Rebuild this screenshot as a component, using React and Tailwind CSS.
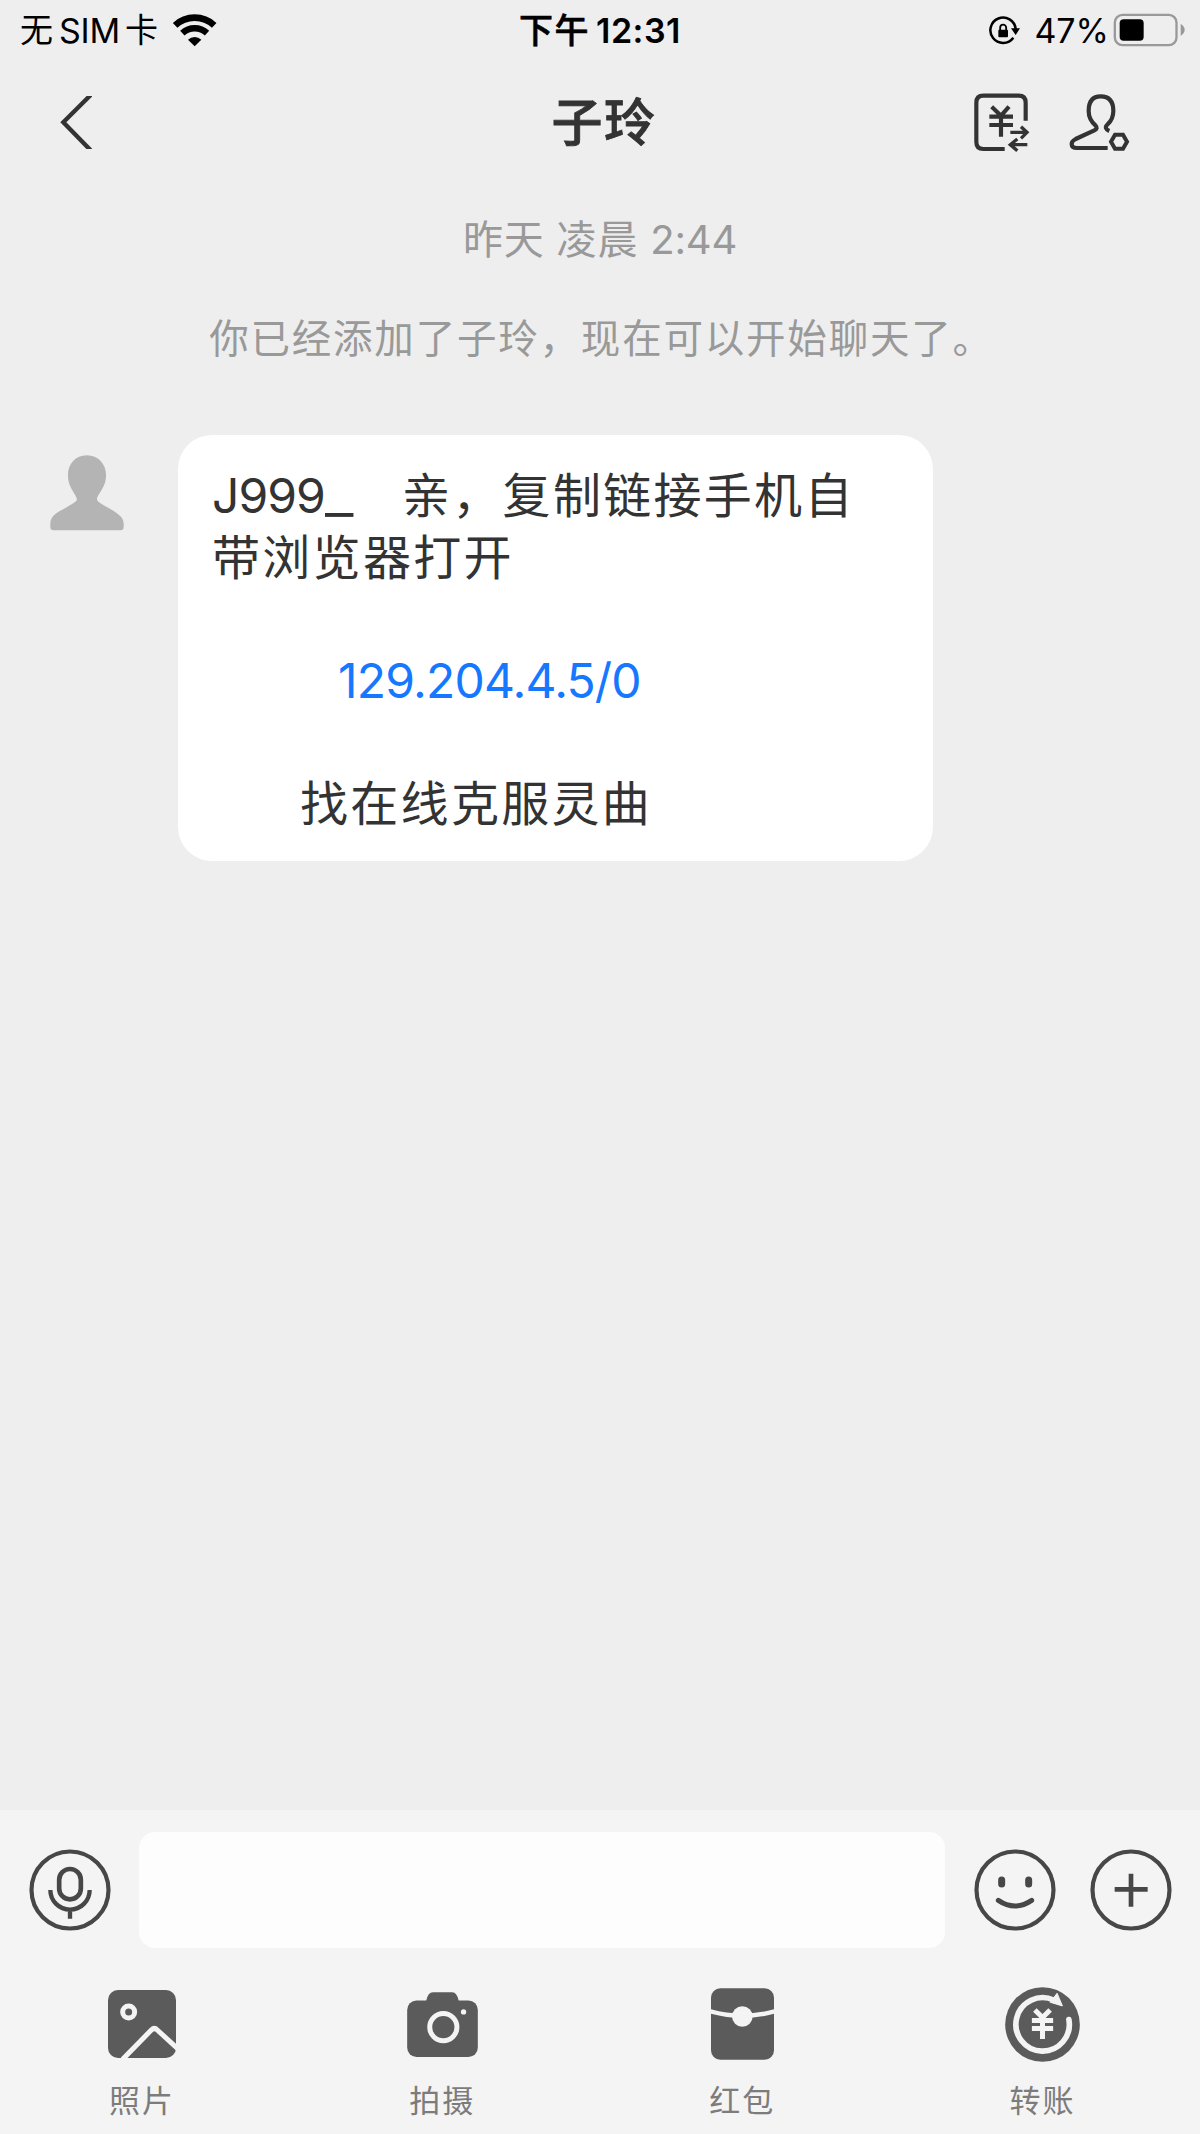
function WifiIcon() {
  return (
    <svg viewBox="0 0 141 108" className="w-[47px] h-9" fill="none" stroke="#000">
      <path d="M12.4 40A86 86 0 0 1 129.6 40" strokeWidth="20" />
      <path d="M34 63.5A54 54 0 0 1 108 63.5" strokeWidth="19" />
      <path d="M71 103L51 83A29 29 0 0 1 91 83Z" fill="#000" stroke="none" />
    </svg>
  );
}

function RotationLockIcon() {
  return (
    <svg viewBox="0 0 102 93" className="w-[34px] h-[31px]" fill="none" stroke="#000">
      <path d="M83 42A38 38 0 1 0 76 68" strokeWidth="7.500" />
      <path d="M69 40H96L83 60Z" fill="#000" stroke="none" />
      <rect x="31" y="44" width="29" height="23" rx="3" fill="#000" stroke="none" />
      <path d="M36.5 46V38a9 9 0 0 1 18 0V46" strokeWidth="5.500" />
    </svg>
  );
}

function BatteryIcon() {
  return (
    <svg viewBox="0 0 216 102" className="w-[72px] h-[34px]">
      <rect x="5.500" y="5.500" width="185" height="91" rx="23" fill="none" stroke="#999" strokeWidth="7" />
      <rect x="20" y="19" width="72" height="64" rx="12" fill="#000" />
      <path d="M203 32Q215 40 215 50.500Q215 61 203 69Z" fill="#999" />
    </svg>
  );
}

function BackIcon() {
  return (
    <svg viewBox="0 0 96 159" className="w-8 h-[53px]" fill="none" stroke="#333" strokeWidth="13">
      <path d="M98 -9L10 79L98 169" />
    </svg>
  );
}

function BillIcon() {
  return (
    <svg viewBox="0 0 174 186" className="w-[58px] h-[62px]" fill="none" stroke="#333" strokeWidth="12.500">
      <path d="M158 86V32Q158 11 137 11H31Q10 11 10 32V150Q10 171 31 171H95" />
      <path d="M56 44L84 71L108 44M49 74H120M49 99H120M84 71V134" />
      <path d="M112 121H160M144 104L162 121L144 139" strokeWidth="10" />
      <path d="M163 158H112M133 141L112 158L133 176" strokeWidth="10" />
    </svg>
  );
}

function ContactIcon() {
  return (
    <svg viewBox="0 0 186 180" className="w-[62px] h-[60px]" fill="none" stroke="#333" strokeWidth="12.500">
      <path d="M116 165H24Q8 165 8 153Q8 144 20 138L76 112Q88 106 80 98Q59 80 59 54Q59 10 95 10Q133 10 133 54Q133 78 116 94Q103 106 121 114" />
      <path d="M126 146L138 125H162L174 146L162 167H138Z" strokeWidth="12" />
    </svg>
  );
}

function AvatarIcon() {
  return (
    <svg viewBox="0 0 223 227" className="w-[74px] h-[76px]" fill="#b4b4b4">
      <path d="M111 0C145 0 169 26 169 60C169 92 150 110 142 128Q140 135 146 140C160 152 190 164 206 178Q222 190 222 206V216Q222 226 212 226H11Q1 226 1 216V206Q1 188 17 176C34 164 62 152 76 140Q83 135 80 128C72 110 54 92 54 60C54 26 77 0 111 0Z" />
    </svg>
  );
}

function RoundIcon({ children }) {
  return (
    <svg viewBox="0 0 246 246" className="w-[82px] h-[82px] shrink-0" fill="none" stroke="#474747">
      <circle cx="123" cy="123" r="115.500" strokeWidth="12.500" />
      {children}
    </svg>
  );
}

function PhotoIcon() {
  return (
    <svg viewBox="0 0 204 204" className="w-[68px] h-[68px]" fill="none" stroke="#f4f4f4" strokeWidth="15">
      <rect width="204" height="204" rx="30" fill="#5b5b5b" stroke="none" />
      <circle cx="62" cy="66" r="18" />
      <path d="M44 208L130 120Q139 111 148 120L212 179" />
    </svg>
  );
}

function CameraIcon() {
  return (
    <svg viewBox="0 0 213 196" className="w-[71px] h-[65px]" fill="#5b5b5b">
      <rect y="26" width="213" height="170" rx="28" />
      <path d="M57 28Q62 1 78 1H136Q150 1 156 28Z" />
      <circle cx="109" cy="106" r="41" fill="none" stroke="#f4f4f4" strokeWidth="15" />
      <circle cx="170" cy="60" r="8" fill="#f4f4f4" />
    </svg>
  );
}

function RedPacketIcon() {
  return (
    <svg viewBox="0 0 189 215" className="w-[63px] h-[72px]">
      <rect width="189" height="215" rx="28" fill="#5b5b5b" />
      <path d="M-4 69Q94 97 193 69" fill="none" stroke="#f4f4f4" strokeWidth="13" />
      <circle cx="94" cy="85" r="31" fill="#f4f4f4" />
    </svg>
  );
}

function TransferIcon() {
  return (
    <svg viewBox="0 0 226 226" className="w-[75px] h-[75px]" fill="none" stroke="#f4f4f4">
      <circle cx="113" cy="113" r="112.500" fill="#5b5b5b" stroke="none" />
      <path d="M192.500 98A80.500 80.500 0 1 1 148 40" strokeWidth="17" strokeLinecap="round" />
      <path d="M157 19L173 57L136 46Z" fill="#f4f4f4" strokeWidth="3" strokeLinejoin="round" />
      <path d="M90 69L113 92L136 69M81 101H145M81 125H145M113 92V157" strokeWidth="15" />
    </svg>
  );
}

const actions = [
  { label: '照片', icon: <PhotoIcon /> },
  { label: '拍摄', icon: <CameraIcon /> },
  { label: '红包', icon: <RedPacketIcon /> },
  { label: '转账', icon: <TransferIcon /> },
];

function StatusBar() {
  return (
    <div className="grid grid-cols-3 h-[60px] pt-px text-[34px] text-black whitespace-nowrap">
      <div className="flex items-center pl-5">
        <span className="text-[33px]">无</span>
        <span className="ml-[6px] tracking-[-0.2px]">SIM</span>
        <span className="ml-[5px] text-[33px]">卡</span>
        <span className="ml-[13px] mb-[2px]">
          <WifiIcon />
        </span>
      </div>
      <div className="flex items-center justify-center">
        <span className="font-medium tracking-[1.5px] [-webkit-text-stroke:0.6px_#000]">下午</span>
        <span className="ml-[6px] font-semibold tracking-[0.5px]">12:31</span>
      </div>
      <div className="flex items-center justify-end pr-[15px]">
        <RotationLockIcon />
        <span className="ml-3 mr-[4px]">47%</span>
        <span className="mb-[2px]">
          <BatteryIcon />
        </span>
      </div>
    </div>
  );
}

function Header() {
  return (
    <div className="flex items-center justify-between h-[124px] pl-[60px] pr-[69px]">
      <div className="w-[175px]">
        <BackIcon />
      </div>
      <h1 className="text-[51px] font-medium tracking-[1.5px] text-[#333] pt-[3px] [-webkit-text-stroke:0.8px_#333]">
        子玲
      </h1>
      <div className="flex items-center gap-[38px] pt-[2px]">
        <BillIcon />
        <ContactIcon />
      </div>
    </div>
  );
}

function Message() {
  return (
    <div className="flex items-start mt-[71px] pl-[50px]">
      <div className="mt-5 mr-[54px]">
        <AvatarIcon />
      </div>
      <div className="w-[755px] h-[426px] rounded-[34px] bg-white pl-[34px] pt-[30px] text-[48px] leading-[61.6px] tracking-[2.3px] text-[#333] whitespace-nowrap">
        <p className="flex">
          <span className="w-[190px] tracking-[-1px]">
            J999
            <span className="inline-block origin-left scale-x-[1.3]">_</span>
          </span>
          <span>亲，复制链接手机自</span>
        </p>
        <p>带浏览器打开</p>
        <p className="mt-[61.6px] pl-[126px] tracking-[-0.8px] text-[#1677ff]">129.204.4.5/0</p>
        <p className="mt-[61.6px] pl-[88px]">找在线克服灵曲</p>
      </div>
    </div>
  );
}

function Composer() {
  return (
    <div className="h-[324px] bg-[#f4f4f4] pt-[22px]">
      <div className="flex items-center pl-[28.5px]">
        <RoundIcon>
          <rect x="90.500" y="60" width="65" height="91" rx="32.500" strokeWidth="14" />
          <path d="M64 123A59 59 0 0 0 182 123M123 182V209" strokeWidth="13" />
        </RoundIcon>
        <input
          type="text"
          aria-label="message"
          className="w-[806px] h-[116px] ml-[28.5px] rounded-2xl bg-[#fdfdfd] outline-none"
        />
        <div className="flex gap-[34px] ml-[28.5px]">
          <RoundIcon>
            <path d="M83 93V105M164 93V105" strokeWidth="21" strokeLinecap="round" />
            <path d="M73 154Q123 188 173 154" strokeWidth="15" strokeLinecap="round" />
          </RoundIcon>
          <RoundIcon>
            <path d="M74 121H173M123 74V173" strokeWidth="14" />
          </RoundIcon>
        </div>
      </div>
      <div className="flex justify-between mt-[38px] pl-[71.5px] pr-[87px]">
        {actions.map(({ label, icon }) => (
          <button key={label} type="button" className="flex flex-col items-center w-[141px]">
            <span className="flex items-center h-[76px]">{icon}</span>
            <span className="mt-[15px] text-[31px] leading-[48px] tracking-[2px] text-[#7c7c7c]">
              {label}
            </span>
          </button>
        ))}
      </div>
    </div>
  );
}

function App() {
  return (
    <div className="flex flex-col w-[1200px] h-[2134px] overflow-hidden bg-[#eee] font-[Inter,'Noto_Sans_CJK_SC',sans-serif]">
      <StatusBar />
      <Header />
      <div className="flex-1">
        <p className="mt-[31px] text-center text-[40px] leading-[50px] tracking-[0.8px] text-[#999]">
          昨天 凌晨 <span className="tracking-[-0.2px]">2:44</span>
        </p>
        <p className="mt-[49px] pl-[3px] text-center text-[39.5px] leading-[50px] tracking-[1.8px] text-[#999]">
          你已经添加了子玲，现在可以开始聊天了。
        </p>
        <Message />
      </div>
      <Composer />
    </div>
  );
}

export default App;
